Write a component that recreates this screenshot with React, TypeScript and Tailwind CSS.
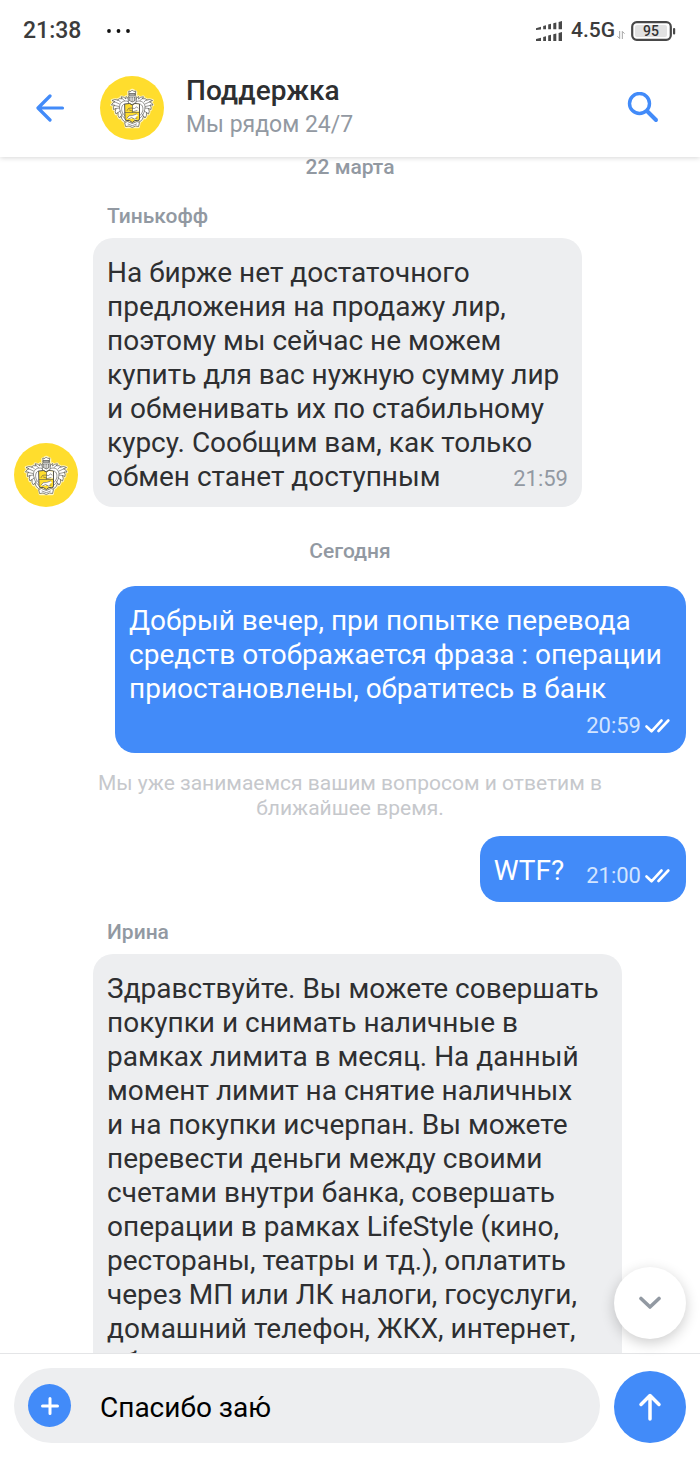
import { useState } from "react";
import type { ReactNode } from "react";

const LEAF =
  "M30 26 Q29 22 26 20.500 Q25.500 22 26 23 Q24 20.500 21 20.800 L22 22.800 Q19 22 17.500 24 Q15 22.800 12 24.500 L15 25.800 Q12.500 26.500 11.500 29 L14.500 29 Q12.800 31 13.500 33.500 L16 32.500 Q14.500 35.500 16 38 L18 36.500 Q17.500 40 19.500 42 L21 40 Q21.500 44 24.500 45.500 L27 44 Z";

function Emblem() {
  return (
    <svg viewBox="0 0 64 64" className="size-16 shrink-0 rounded-full bg-[#ffdd2d]" aria-hidden="true">
      <g fill="#fff" stroke="#fff6c4" strokeWidth="2.600" strokeLinejoin="round">
        <path d={LEAF} />
        <path d={LEAF} transform="translate(64.500 0) scale(-1 1)" />
        <path d="M28.500 26 L28.500 16 L32.300 14 L36 16 V26 Z M25 46.500 H39.500 L38.500 51 H26 Z" />
      </g>
      <g stroke="#55544f" strokeWidth="0.700" strokeLinejoin="round" strokeLinecap="round">
        {[false, true].map((flip) => (
          <g key={String(flip)} transform={flip ? "translate(64.5 0) scale(-1 1)" : undefined}>
            <path fill="#fff" d={LEAF} />
            <path
              fill="none"
              strokeWidth="0.600"
              d="M28 25.500 C23.500 23.500 19 27 19.500 32 C20 37 22 40.500 25 42.500 M24.500 28 C21.500 28.500 21 33 22.200 36 C22.800 38 24 39 24.800 39.500 M17.500 24 Q19.500 24 20.500 26 M15 26 L19.500 28 M14.500 29.500 L19 30.500 M16 32.500 L19.500 32 M18 36.500 L20.500 35 M21 40 L22.500 38 M22 22.500 L24.500 24.500"
            />
          </g>
        ))}
        <path fill="#fff" d="M28.500 26.500 L28 22 L29 19.500 V17 L28.800 15 L30.800 15.500 L32.300 14 L33.800 15.500 L35.800 15 L35.500 17 V19.500 L36.500 22 L36 26.500 L32.300 28.500 Z" />
        <path fill="#b5b4af" d="M29.500 17.500 H35 V19.300 H29.500 Z M29.500 21 H35 V24.500 L32.300 26 L29.500 24.500 Z" />
        <path fill="none" stroke="#fff" strokeWidth="0.600" d="M31 21.500 V24.500 M33.500 21.500 V24.500" />
        <path fill="#ffdd2d" strokeWidth="1" d="M25 28 L29.500 27.500 L32.300 29 L35 27.500 L39.500 28 V43 Q39.500 44.500 37.500 44.500 H35 L32.300 46.500 L29.500 44.500 H27 Q25 44.500 25 43 Z" />
        <path fill="#fff" stroke="none" d="M32.600 29.500 L35 28 L38.900 28.400 V35.500 H32.600 Z M27 42.500 Q29 38.500 32.500 39 L36.500 38 L38 39.500 L35.500 41 L36.500 43.500 H34 L33 42 L30.500 43 Z" />
        <path fill="none" strokeWidth="0.600" d="M25 36.500 H39.500 M32.500 29.500 V36 M27 34.500 Q28 31.500 31 32 L34.500 32.500 L36.500 31 L38 32 M29.500 34 L33.500 35.500 L37 34.500 M27 42 Q29 38.500 32.500 39.500 L36.500 38 M28.500 43 L31.500 41.500 L34.500 43 L37 42" />
        <path fill="#fff" d="M25 46.500 L27.500 45.500 L32.300 47.500 L37 45.500 L39.500 46.500 L38.500 50.500 L35.500 50 L32.300 51.500 L29 50 L26 50.500 Z" />
        <path fill="none" strokeWidth="0.600" d="M28 48 L32.300 49.700 L36.500 48" />
      </g>
    </svg>
  );
}

function Signal() {
  return (
    <svg viewBox="0 0 27 20" className="h-5 w-[27px]" fill="#484848" aria-hidden="true">
      <path d="M0 7.200 L5 5.800 V8.500 L0 9 Z M7.200 5 L10 4.200 V8.300 H7.200 Z M12.200 3.600 L15 2.800 V8.200 H12.200 Z M17.300 2.200 L20.300 1.400 V8.200 H17.300 Z M22.600 0.900 L26 0 V8.200 H22.600 Z" />
      <path d="M0 18 L5 16.800 V20 H0 Z M7.200 16 L10 15.200 V20 H7.200 Z M12.200 14.600 L15 13.800 V20 H12.200 Z M17.300 13.200 L20.300 12.400 V20 H17.300 Z M22.600 11.900 L26 11 V20 H22.600 Z" />
    </svg>
  );
}

function Battery() {
  return (
    <svg viewBox="0 0 45 20" className="h-5 w-[45px]" role="img" aria-label="95">
      <rect x="1.200" y="1.200" width="38.600" height="17.600" rx="4.500" fill="#fff" stroke="#484848" strokeWidth="2.200" />
      <rect x="4" y="4" width="32" height="12" rx="2" fill="#e2e2e2" />
      <rect x="42" y="7" width="2.200" height="6.500" rx="1" fill="#484848" />
      <text x="20" y="15" textAnchor="middle" fontSize="14" fontWeight="500" fill="#333">95</text>
    </svg>
  );
}

function ReadMarks() {
  return (
    <svg viewBox="0 0 25 14" className="h-3.5 w-[25px]" fill="none" stroke="#fff" strokeWidth="2.600" strokeLinecap="round" strokeLinejoin="round" aria-hidden="true">
      <path d="M1.500 7.500 L6.500 12.300 L16.500 1.500 M13.500 12 L23.300 1.500" />
    </svg>
  );
}

function DateLabel({ children }: { children: ReactNode }) {
  return <p className="text-center text-[21px] leading-5 font-medium text-[#9299a2]">{children}</p>;
}

function Sender({ children }: { children: ReactNode }) {
  return <p className="pl-[93px] text-[21px] leading-6 font-medium text-[#9299a2]">{children}</p>;
}

function SentMeta({ time }: { time: string }) {
  return (
    <span className="flex items-center gap-1 pr-0.5 text-[22px] leading-6 text-[#d3e5ff]">
      <time>{time}</time>
      <ReadMarks />
    </span>
  );
}

const bubble = "max-w-full rounded-[20px] px-3.5 text-[28px] leading-[34px]";

export default function App() {
  const [draft, setDraft] = useState("Спасибо заю́");
  return (
    <div className="flex h-screen flex-col overflow-hidden bg-white font-[Roboto,sans-serif] text-[#2e2f31]">
      <header className="relative z-10 shrink-0 bg-white pb-[15px] shadow-[0_1px_5px_rgba(0,0,0,0.16)]">
        <div className="flex h-[62px] items-center pr-6 pl-[23px] text-[#3c3c3c]">
          <span className="text-[23px] font-medium">21:38</span>
          <svg viewBox="0 0 24 4" className="ml-[26px] h-1 w-6" fill="#111" aria-hidden="true">
            <circle cx="2" cy="2" r="1.900" />
            <circle cx="11.500" cy="2" r="1.900" />
            <circle cx="21" cy="2" r="1.900" />
          </svg>
          <div className="ml-auto flex items-center">
            <Signal />
            <span className="ml-2 text-[21px] font-medium">4.5G</span>
            <svg viewBox="0 0 9 9" className="mt-2 mr-1.5 ml-0.5 size-2" fill="none" stroke="#999" aria-hidden="true">
              <path d="M3 0 V8.500 L0.500 6 M6 9 V0.500 L8.500 3" />
            </svg>
            <Battery />
          </div>
        </div>
        <div className="flex items-center px-[35px] pt-3">
          <button type="button" aria-label="Назад" className="flex size-[30px] items-center justify-center">
            <svg viewBox="0 0 30 28" className="h-7 w-[30px]" fill="none" stroke="#428bf9" strokeWidth="3.200" strokeLinecap="round" strokeLinejoin="round">
              <path d="M15 2 L3 14 L15 26 M3.500 14 H27.500" />
            </svg>
          </button>
          <div className="ml-[35px]">
            <Emblem />
          </div>
          <div className="ml-[22px] flex-1">
            <h1 className="text-[28px] leading-[34px] font-medium">Поддержка</h1>
            <p className="text-[23px] leading-[34px] text-[#9299a2]">Мы рядом 24/7</p>
          </div>
          <button type="button" aria-label="Поиск" className="mr-1.5 flex size-8 items-center justify-center">
            <svg viewBox="0 0 32 32" className="size-8" fill="none" stroke="#428bf9" strokeLinecap="round">
              <circle cx="12.500" cy="11.500" r="10" strokeWidth="3.400" />
              <path d="M20.500 19.500 L29 28" strokeWidth="4" />
            </svg>
          </button>
        </div>
      </header>

      <div className="relative min-h-0 flex-1">
        <main className="flex h-full flex-col overflow-hidden px-3.5 *:shrink-0">
          <DateLabel>22 марта</DateLabel>
          <div className="mt-[27px]">
            <Sender>Тинькофф</Sender>
          </div>
          <div className="mt-2.5 flex items-end gap-[15px]">
            <Emblem />
            <div className={`${bubble} w-[489px] bg-[#edeef0] pt-[18px] pb-[13px]`}>
              <p>
                На бирже нет достаточного<br />
                предложения на продажу лир,<br />
                поэтому мы сейчас не можем<br />
                купить для вас нужную сумму лир<br />
                и обменивать их по стабильному<br />
                курсу. Сообщим вам, как только
              </p>
              <div className="flex items-end justify-between">
                <p>обмен станет доступным</p>
                <time className="text-[22px] leading-[30px] text-[#9299a2]">21:59</time>
              </div>
            </div>
          </div>

          <div className="mt-[34px]">
            <DateLabel>Сегодня</DateLabel>
          </div>
          <div className={`${bubble} mt-[25px] w-[571px] self-end bg-[#428bf9] pt-[18px] pb-[15px] text-white`}>
            <p>
              Добрый вечер, при попытке перевода<br />
              средств отображается фраза : операции<br />
              приостановлены, обратитесь в банк
            </p>
            <div className="mt-2 flex justify-end">
              <SentMeta time="20:59" />
            </div>
          </div>

          <p className="mt-[18px] text-center text-[21px] leading-[25px] text-[#c6c8cc]">
            Мы уже занимаемся вашим вопросом и ответим в<br />
            ближайшее время.
          </p>

          <div className={`${bubble} mt-[15px] flex items-end gap-[22px] self-end bg-[#428bf9] pt-[18px] pb-3.5 text-white`}>
            <p>WTF?</p>
            <SentMeta time="21:00" />
          </div>

          <div className="mt-[18px]">
            <Sender>Ирина</Sender>
          </div>
          <div className={`${bubble} mt-2.5 ml-[79px] w-[529px] self-start bg-[#edeef0] pt-[18px] pb-[13px]`}>
            <p>
              Здравствуйте. Вы можете совершать<br />
              покупки и снимать наличные в<br />
              рамках лимита в месяц. На данный<br />
              момент лимит на снятие наличных<br />
              и на покупки исчерпан. Вы можете<br />
              перевести деньги между своими<br />
              счетами внутри банка, совершать<br />
              операции в рамках LifeStyle (кино,<br />
              рестораны, театры и тд.), оплатить<br />
              через МП или ЛК налоги, госуслуги,<br />
              домашний телефон, ЖКХ, интернет,<br />
              обслуживание
            </p>
          </div>
        </main>
        <button
          type="button"
          aria-label="Вниз"
          className="absolute right-3.5 bottom-3.5 flex size-[72px] items-center justify-center rounded-full bg-white shadow-[0_4px_14px_rgba(0,0,0,0.2)]"
        >
          <svg viewBox="0 0 24 14" className="h-3.5 w-6" fill="none" stroke="#9299a2" strokeWidth="3.600" strokeLinecap="round" strokeLinejoin="round">
            <path d="M3 2.500 L12 11 L21 2.500" />
          </svg>
        </button>
      </div>

      <form
        className="flex shrink-0 items-end gap-3.5 border-t border-[#e4e5e7] bg-white px-3.5 py-3.5"
        onSubmit={(e) => e.preventDefault()}
      >
        <div className="flex h-[75px] min-w-0 flex-1 items-center rounded-full bg-[#edeef0] pr-6 pl-3.5">
          <button type="button" aria-label="Прикрепить" className="flex size-[43px] shrink-0 items-center justify-center rounded-full bg-[#428bf9]">
            <svg viewBox="0 0 18 18" className="size-[18px]" fill="none" stroke="#fff" strokeWidth="3" strokeLinecap="round">
              <path d="M9 1.500 V16.500 M1.500 9 H16.500" />
            </svg>
          </button>
          <input
            type="text"
            aria-label="Сообщение"
            value={draft}
            onChange={(e) => setDraft(e.target.value)}
            className="ml-[29px] min-w-0 flex-1 bg-transparent pt-1 text-[28px] leading-[34px] text-black outline-none"
          />
        </div>
        <button type="submit" aria-label="Отправить" className="flex size-[72px] shrink-0 items-center justify-center rounded-full bg-[#428bf9]">
          <svg viewBox="0 0 24 28" className="h-7 w-6" fill="none" stroke="#fff" strokeWidth="3.500" strokeLinecap="round" strokeLinejoin="round">
            <path d="M3 11.500 L12 2.500 L21 11.500 M12 3 V26" />
          </svg>
        </button>
      </form>
    </div>
  );
}
